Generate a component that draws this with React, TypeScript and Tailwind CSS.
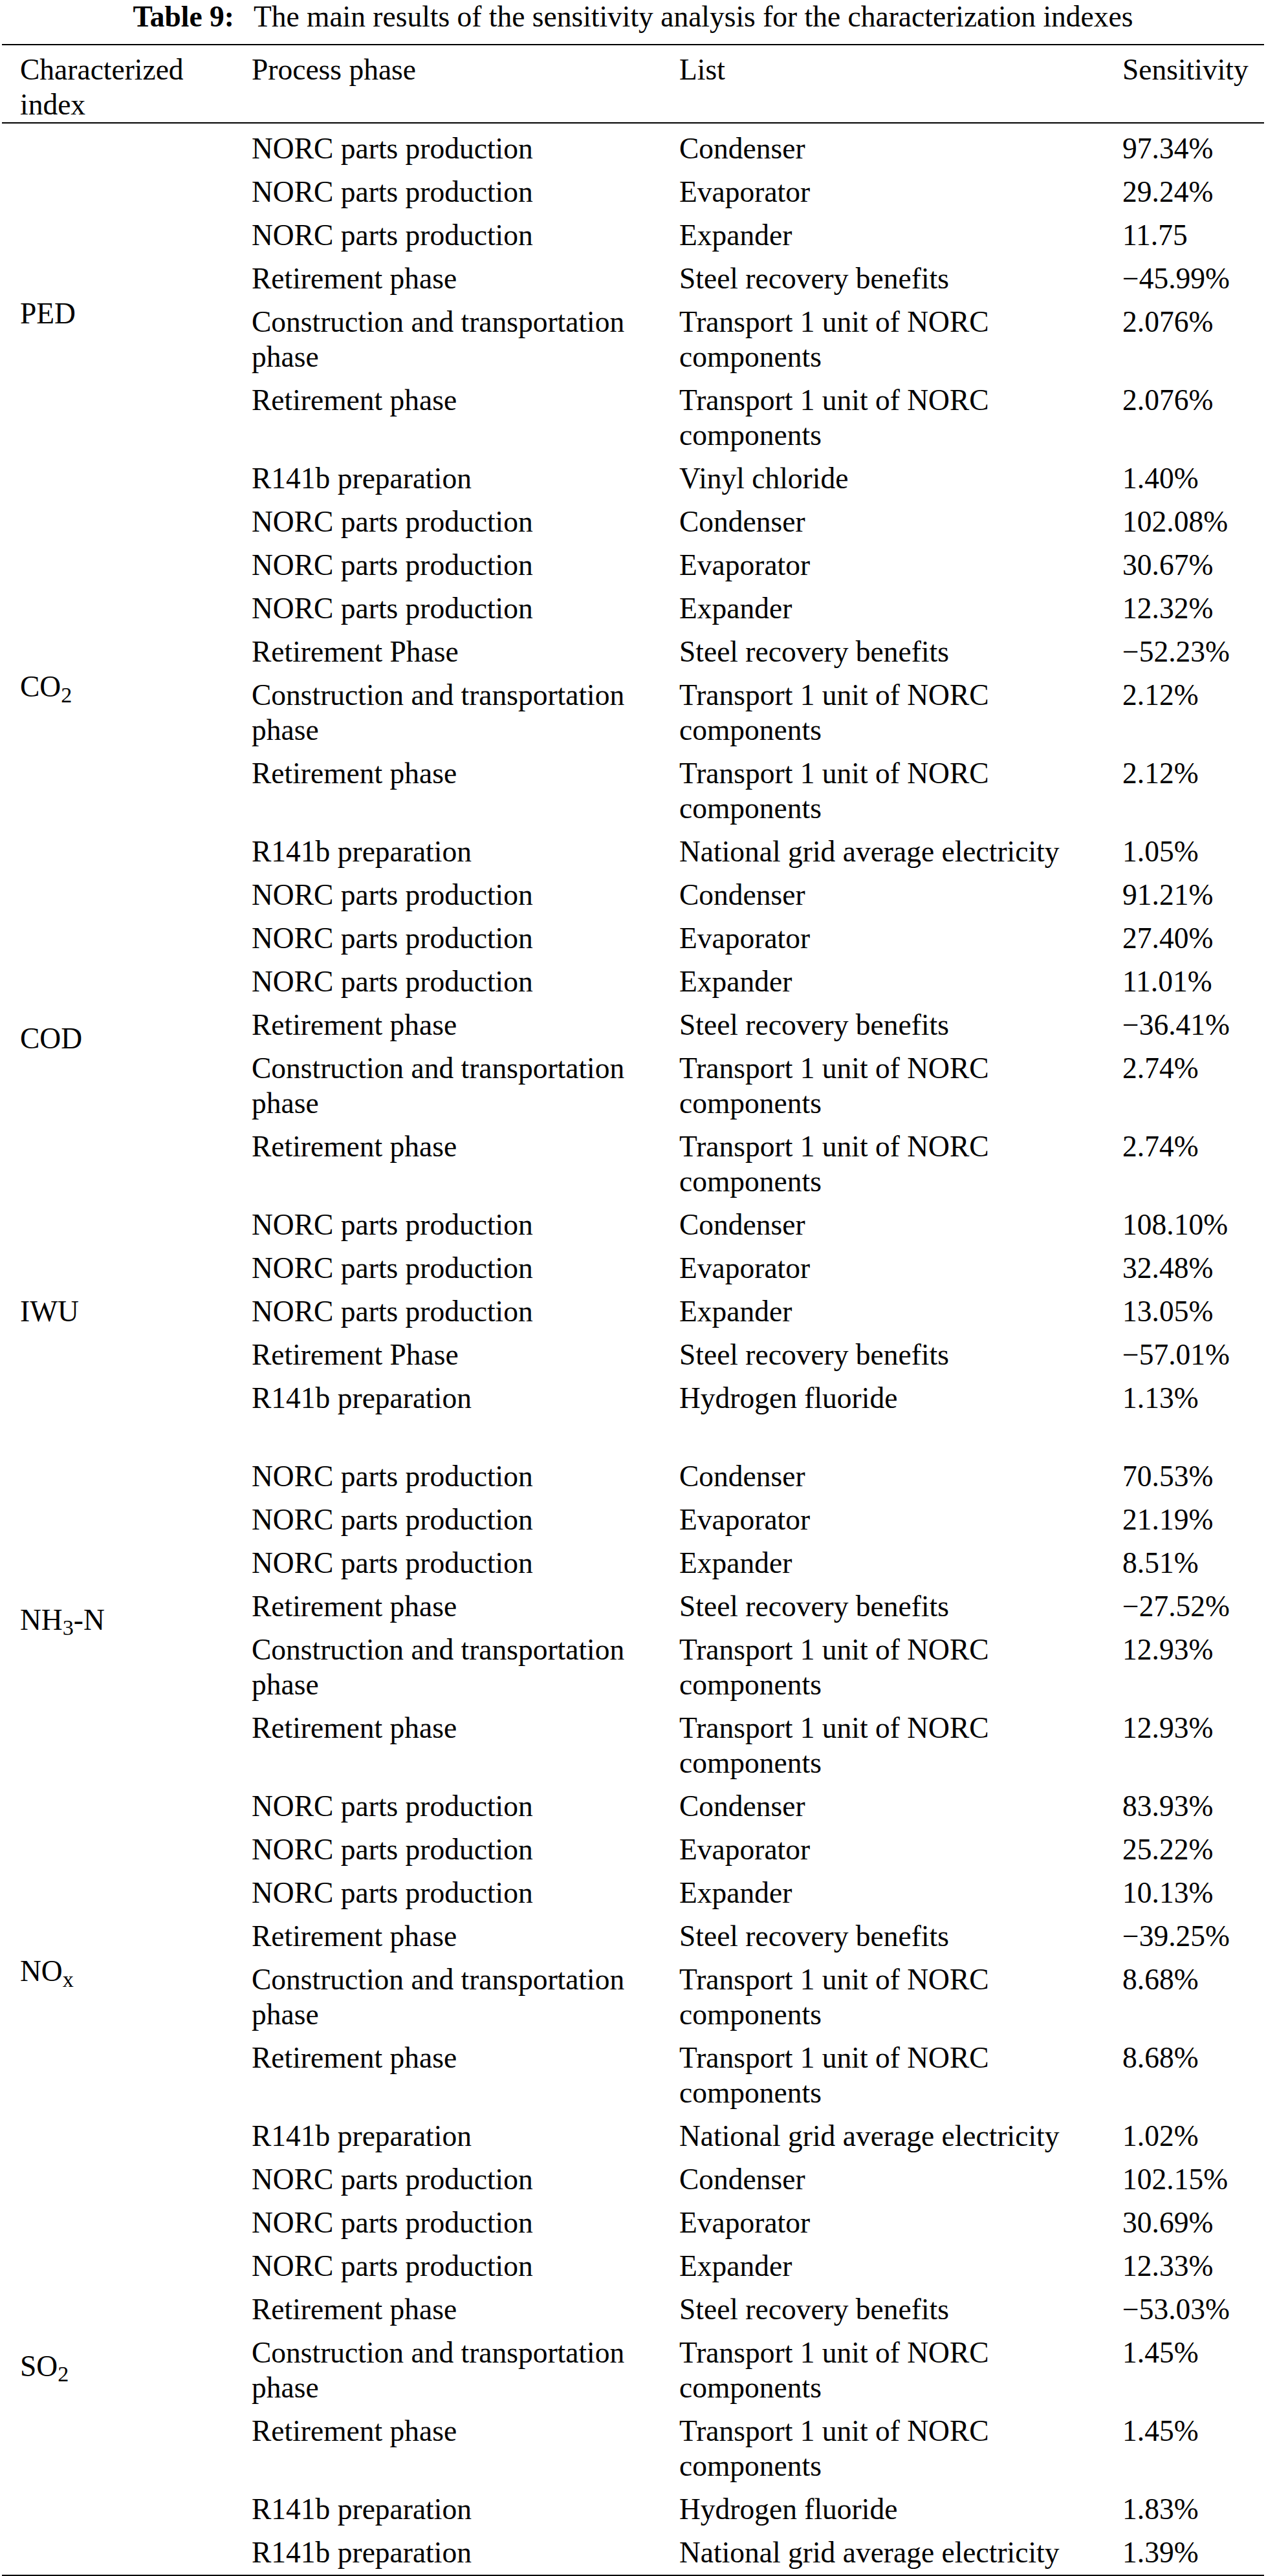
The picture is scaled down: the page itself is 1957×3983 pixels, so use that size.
import type { ReactNode } from "react";

type Row = [string, string, string];

interface Group {
  label: ReactNode;
  rows: Row[];
}

const CONSTRUCTION = "Construction and transportation phase";
const TRANSPORT = "Transport 1 unit of NORC components";
const NORC = "NORC parts production";

const groups: Group[] = [
  {
    label: "PED",
    rows: [
      [NORC, "Condenser", "97.34%"],
      [NORC, "Evaporator", "29.24%"],
      [NORC, "Expander", "11.75"],
      ["Retirement phase", "Steel recovery benefits", "\u221245.99%"],
      [CONSTRUCTION, TRANSPORT, "2.076%"],
      ["Retirement phase", TRANSPORT, "2.076%"],
      ["R141b preparation", "Vinyl chloride", "1.40%"],
    ],
  },
  {
    label: (
      <>
        CO<sub>2</sub>
      </>
    ),
    rows: [
      [NORC, "Condenser", "102.08%"],
      [NORC, "Evaporator", "30.67%"],
      [NORC, "Expander", "12.32%"],
      ["Retirement Phase", "Steel recovery benefits", "\u221252.23%"],
      [CONSTRUCTION, TRANSPORT, "2.12%"],
      ["Retirement phase", TRANSPORT, "2.12%"],
      ["R141b preparation", "National grid average electricity", "1.05%"],
    ],
  },
  {
    label: "COD",
    rows: [
      [NORC, "Condenser", "91.21%"],
      [NORC, "Evaporator", "27.40%"],
      [NORC, "Expander", "11.01%"],
      ["Retirement phase", "Steel recovery benefits", "\u221236.41%"],
      [CONSTRUCTION, TRANSPORT, "2.74%"],
      ["Retirement phase", TRANSPORT, "2.74%"],
    ],
  },
  {
    label: "IWU",
    rows: [
      [NORC, "Condenser", "108.10%"],
      [NORC, "Evaporator", "32.48%"],
      [NORC, "Expander", "13.05%"],
      ["Retirement Phase", "Steel recovery benefits", "\u221257.01%"],
      ["R141b preparation", "Hydrogen fluoride", "1.13%"],
    ],
  },
  {
    label: (
      <>
        NH<sub>3</sub>-N
      </>
    ),
    rows: [
      [NORC, "Condenser", "70.53%"],
      [NORC, "Evaporator", "21.19%"],
      [NORC, "Expander", "8.51%"],
      ["Retirement phase", "Steel recovery benefits", "\u221227.52%"],
      [CONSTRUCTION, TRANSPORT, "12.93%"],
      ["Retirement phase", TRANSPORT, "12.93%"],
    ],
  },
  {
    label: (
      <>
        NO<sub>x</sub>
      </>
    ),
    rows: [
      [NORC, "Condenser", "83.93%"],
      [NORC, "Evaporator", "25.22%"],
      [NORC, "Expander", "10.13%"],
      ["Retirement phase", "Steel recovery benefits", "\u221239.25%"],
      [CONSTRUCTION, TRANSPORT, "8.68%"],
      ["Retirement phase", TRANSPORT, "8.68%"],
      ["R141b preparation", "National grid average electricity", "1.02%"],
    ],
  },
  {
    label: (
      <>
        SO<sub>2</sub>
      </>
    ),
    rows: [
      [NORC, "Condenser", "102.15%"],
      [NORC, "Evaporator", "30.69%"],
      [NORC, "Expander", "12.33%"],
      ["Retirement phase", "Steel recovery benefits", "\u221253.03%"],
      [CONSTRUCTION, TRANSPORT, "1.45%"],
      ["Retirement phase", TRANSPORT, "1.45%"],
      ["R141b preparation", "Hydrogen fluoride", "1.83%"],
      ["R141b preparation", "National grid average electricity", "1.39%"],
    ],
  },
];

function DataRow({ row }: { row: Row }) {
  const [phase, list, value] = row;
  return (
    <div className="flex py-[6.5px]">
      <div className="w-[661px] shrink-0 pr-[30px]">{phase}</div>
      <div className="w-[685px] shrink-0 pr-[40px]">{list}</div>
      <div className="flex-1">{value}</div>
    </div>
  );
}

function GroupBlock({ group }: { group: Group }) {
  return (
    <div className="flex">
      {/* 指标名在整组行里垂直居中 */}
      <div className="w-[386px] shrink-0 pl-[28px] flex items-center">
        <span>{group.label}</span>
      </div>
      <div className="flex-1 flex flex-col">
        {group.rows.map((row, i) => (
          <DataRow key={i} row={row} />
        ))}
      </div>
    </div>
  );
}

export default function App() {
  return (
    <div className="w-[1957px] bg-white text-black font-['Liberation_Serif','Times_New_Roman',serif] text-[45.5px] leading-[54px]">
      <h1 className="text-center leading-[51px] font-normal mb-[17px]">
        <span className="font-bold">Table 9:</span>
        <span className="ml-[30px]">
          The main results of the sensitivity analysis for the characterization indexes
        </span>
      </h1>

      <div className="mx-[3px] border-t-2 border-b-2 border-black">
        <div className="flex pt-[11px]">
          <div className="w-[386px] shrink-0 pl-[28px] pr-[60px]">Characterized index</div>
          <div className="w-[661px] shrink-0">Process phase</div>
          <div className="w-[685px] shrink-0">List</div>
          <div className="flex-1">Sensitivity</div>
        </div>
      </div>

      <div className="mx-[3px] pt-[5.5px] border-b-2 border-black">
        {groups.slice(0, 4).map((g, i) => (
          <GroupBlock key={i} group={g} />
        ))}
        <div className="h-[54px]" />
        {groups.slice(4).map((g, i) => (
          <GroupBlock key={i + 4} group={g} />
        ))}
      </div>
    </div>
  );
}
